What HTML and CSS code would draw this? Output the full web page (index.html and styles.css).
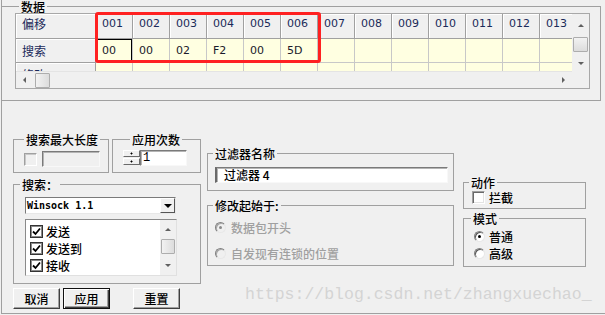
FILE: index.html
```html
<!DOCTYPE html>
<html lang="zh-CN">
<head>
    <meta charset="UTF-8">
    <title>过滤器</title>
    <link rel="stylesheet" href="styles.css">
</head>
<body>
    <div id="wrap">
        <fieldset class="box data">
            <legend>数据</legend>
            <div class="grid">
                <div class="grid-main">
                    <div class="row head">
                        <div class="rh">偏移</div>
                        <div class="c">001</div>
                        <div class="c">002</div>
                        <div class="c">003</div>
                        <div class="c">004</div>
                        <div class="c">005</div>
                        <div class="c">006</div>
                        <div class="c">007</div>
                        <div class="c">008</div>
                        <div class="c">009</div>
                        <div class="c">010</div>
                        <div class="c">011</div>
                        <div class="c">012</div>
                        <div class="c">013</div>
                    </div>
                    <div class="row vals">
                        <div class="rh">搜索</div>
                        <div class="c sel">00</div>
                        <div class="c">00</div>
                        <div class="c">02</div>
                        <div class="c">F2</div>
                        <div class="c">00</div>
                        <div class="c">5D</div>
                        <div class="c"></div>
                        <div class="c"></div>
                        <div class="c"></div>
                        <div class="c"></div>
                        <div class="c"></div>
                        <div class="c"></div>
                        <div class="c"></div>
                    </div>
                    <div class="row part">
                        <div class="rh">修改</div>
                        <div class="c"></div>
                        <div class="c"></div>
                        <div class="c"></div>
                        <div class="c"></div>
                        <div class="c"></div>
                        <div class="c"></div>
                        <div class="c"></div>
                        <div class="c"></div>
                        <div class="c"></div>
                        <div class="c"></div>
                        <div class="c"></div>
                        <div class="c"></div>
                        <div class="c"></div>
                    </div>
                    <div class="hscroll">
                        <span class="sbtn"><i class="tri left"></i></span>
                        <span class="thumb"></span>
                        <span class="sfill"></span>
                        <span class="sbtn"><i class="tri right"></i></span>
                    </div>
                </div>
                <div class="vscroll">
                    <span class="sbtn"><i class="tri up"></i></span>
                    <span class="thumb"></span>
                    <span class="sfill"></span>
                    <span class="sbtn"><i class="tri down"></i></span>
                    <span class="corner"></span>
                </div>
                <div class="hilite"></div>
            </div>
        </fieldset>

        <div class="lower">
            <div class="col-left">
                <div class="pair">
                    <fieldset class="box maxlen">
                        <legend>搜索最大长度</legend>
                        <div class="line">
                            <span class="chk off"></span>
                            <span class="edit off"></span>
                        </div>
                    </fieldset>
                    <fieldset class="box times">
                        <legend>应用次数</legend>
                        <div class="line">
                            <span class="spin"><i></i><i></i></span>
                            <span class="edit num">1</span>
                        </div>
                    </fieldset>
                </div>
                <fieldset class="box search">
                    <legend>搜索：</legend>
                    <div class="combo">
                        <span class="combo-text">Winsock 1.1</span>
                        <span class="drop"><i class="tri down big"></i></span>
                    </div>
                    <div class="list">
                        <div class="items">
                            <div class="item"><span class="chk on"><svg width="9" height="9" viewBox="0 0 9 9"><path d="M1 4.5 L3.5 7 L8 1.5" fill="none" stroke="#000" stroke-width="1.8"/></svg></span>发送</div>
                            <div class="item"><span class="chk on"><svg width="9" height="9" viewBox="0 0 9 9"><path d="M1 4.5 L3.5 7 L8 1.5" fill="none" stroke="#000" stroke-width="1.8"/></svg></span>发送到</div>
                            <div class="item"><span class="chk on"><svg width="9" height="9" viewBox="0 0 9 9"><path d="M1 4.5 L3.5 7 L8 1.5" fill="none" stroke="#000" stroke-width="1.8"/></svg></span>接收</div>
                        </div>
                        <div class="lscroll">
                            <span class="sbtn"><i class="tri up"></i></span>
                            <span class="thumb"></span>
                            <span class="sfill"></span>
                            <span class="sbtn"><i class="tri down"></i></span>
                        </div>
                    </div>
                </fieldset>
                <div class="btns">
                    <span class="btn">取消</span>
                    <span class="btn def">应用</span>
                    <span class="btn reset">重置</span>
                </div>
            </div>

            <div class="col-mid">
                <fieldset class="box fname">
                    <legend>过滤器名称</legend>
                    <div class="edit name">过滤器 4</div>
                </fieldset>
                <fieldset class="box modify">
                    <legend>修改起始于:</legend>
                    <div class="opt dis"><span class="rad dot"></span>数据包开头</div>
                    <div class="opt dis"><span class="rad"></span>自发现有连锁的位置</div>
                </fieldset>
            </div>

            <div class="col-right">
                <fieldset class="box action">
                    <legend>动作</legend>
                    <div class="opt"><span class="chk"></span>拦截</div>
                </fieldset>
                <fieldset class="box mode">
                    <legend>模式</legend>
                    <div class="opt"><span class="rad dot"></span>普通</div>
                    <div class="opt"><span class="rad"></span>高级</div>
                </fieldset>
            </div>
        </div>

        <div class="mark">https://blog.csdn.net/zhangxuechao_</div>
    </div>
</body>
</html>
```

FILE: styles.css
```css
*{
    margin: 0;
    padding: 0;
    box-sizing: border-box;
}
body{
    background-color: #f0f0f0;
    font-family: "Noto Sans CJK SC", sans-serif;
    font-size: 12px;
    font-weight: 500;
    color: #000;
    overflow: hidden;
}
#wrap{
    position: relative;
    width: 604px;
    height: 314px;
    margin-left: 1px;
    border-left: 1px solid #a0a0a0;
    border-bottom: 1px solid #a0a0a0;
}

/* group boxes */
.box{
    border: 1px solid #a0a0a0;
    min-width: 0;
}
.box legend{
    height: 13px;
    line-height: 13px;
    padding: 0 2px;
    font-size: 12px;
}
.data{
    width: 599px;
    height: 101px;
    border-left: none;
    padding: 0 10px 0 13px;
}
.data legend{margin-left: 4px;}

/* grid */
.grid{
    position: relative;
    display: flex;
    width: 575px;
    height: 76px;
    border: 1px solid #a8a8a8;
    font-weight: 400;
}
.grid-main{
    width: 556px;
    display: flex;
    flex-direction: column;
    overflow: hidden;
}
.row{
    display: flex;
    flex: none;
}
.rh{
    width: 80px;
    flex: none;
    padding-left: 6px;
    background-color: #f0f0f0;
    color: #1b2a5a;
    border-right: 1px solid #a0a0a0;
    border-bottom: 1px solid #a0a0a0;
    box-shadow: inset 1px 1px #fff;
    overflow: hidden;
}
.c{
    width: 37px;
    flex: none;
    padding-left: 6px;
    font-family: "DejaVu Sans", sans-serif;
    font-size: 11px;
}
.head{height: 25px;}
.head .rh, .head .c{
    line-height: 20px;
}
.head .c{
    background-color: #f0f0f0;
    color: #1b2a5a;
    border-right: 1px solid #a0a0a0;
    border-bottom: 1px solid #a0a0a0;
    box-shadow: inset 1px 1px #fff;
}
.vals{height: 24px;}
.vals .rh, .vals .c{line-height: 23px;}
.vals .c, .part .c{
    background-color: #ffffe1;
    color: #1a1a2a;
    border-right: 1px solid #c8c8c8;
    border-bottom: 1px solid #c8c8c8;
}
.vals .c.sel{
    box-shadow: inset 0 0 0 1px #000;
}
.part{height: 8px;}
.part .rh{line-height: 23px; border-bottom: none;}
.part .c{border-bottom: none;}

.hilite{
    position: absolute;
    left: 79px;
    top: -2px;
    width: 226px;
    height: 51px;
    border: 3px solid #ff2121;
    border-radius: 3px;
}

/* scrollbars */
.hscroll{
    display: flex;
    height: 17px;
    flex: none;
    align-items: center;
    background-color: #f0f0f0;
    border-top: 1px solid #e4e4e4;
}
.sbtn{
    width: 17px;
    height: 17px;
    flex: none;
    display: flex;
    align-items: center;
    justify-content: center;
}
.sfill{flex: 1;}
.thumb{
    flex: none;
    background: linear-gradient(to right, #f2f2f2, #dcdcdc);
    border: 1px solid #adadad;
    border-radius: 1px;
}
.hscroll .thumb{
    width: 15px;
    height: 15px;
    margin-left: 2px;
}
.vscroll{
    width: 17px;
    display: flex;
    flex-direction: column;
    align-items: center;
    background-color: #f0f0f0;
}
.vscroll .thumb{
    width: 15px;
    height: 15px;
    margin-top: 1px;
    background: linear-gradient(to bottom, #f2f2f2, #dcdcdc);
}
.vscroll .sbtn{height: 22px;}
.vscroll .corner{
    height: 18px;
    width: 17px;
    flex: none;
}
.tri{
    display: block;
    width: 0;
    height: 0;
}
.tri.up{
    border-left: 3px solid transparent;
    border-right: 3px solid transparent;
    border-bottom: 3px solid #606060;
}
.tri.down{
    border-left: 3px solid transparent;
    border-right: 3px solid transparent;
    border-top: 3px solid #606060;
}
.tri.left{
    border-top: 3px solid transparent;
    border-bottom: 3px solid transparent;
    border-right: 3px solid #606060;
}
.tri.right{
    border-top: 3px solid transparent;
    border-bottom: 3px solid transparent;
    border-left: 3px solid #606060;
}
.tri.big{
    border-left-width: 4px;
    border-right-width: 4px;
    border-top: 4px solid #000;
}

/* lower part */
.lower{
    display: flex;
    align-items: flex-start;
    padding-left: 11px;
}
.col-left{
    width: 188px;
    margin-top: 32px;
}
.pair{
    display: flex;
    gap: 3px;
}
.maxlen{width: 96px; height: 40px;}
.maxlen legend{margin-left: 10px;}
.times{width: 89px; height: 40px;}
.times legend{margin-left: 17px;}
.line{
    display: flex;
    align-items: center;
    gap: 5px;
    height: 26px;
    padding-left: 10px;
}
.times .line{
    gap: 0;
    align-items: flex-start;
    padding-top: 4px;
}

.chk{
    width: 13px;
    height: 13px;
    flex: none;
    display: flex;
    align-items: center;
    justify-content: center;
    background-color: #fff;
    border: 1px solid;
    border-color: #a0a0a0 #fff #fff #a0a0a0;
    box-shadow: inset 1px 1px #696969, inset -1px -1px #e3e3e3;
}
.chk.off{
    background-color: #f0f0f0;
    box-shadow: inset 1px 1px #c8c8c8;
}
.chk.on{
    border: 1px solid #333;
    box-shadow: inset 0 0 0 1px #8a8a8a;
}
.edit{
    display: block;
    height: 16px;
    background-color: #fff;
    border: 1px solid;
    border-color: #7a7a7a #f8f8f8 #f8f8f8 #7a7a7a;
    box-shadow: inset 1px 1px #b4b4b4;
}
.edit.off{
    width: 58px;
    background-color: #f0f0f0;
}
.edit.num{
    width: 47px;
    padding-left: 2px;
    line-height: 14px;
    font-family: "Liberation Mono", monospace;
}
.spin{
    width: 17px;
    height: 15px;
    display: flex;
    flex-direction: column;
    gap: 1px;
}
.spin i{
    flex: 1;
    border: 1px solid;
    border-color: #fff #6a6a6a #6a6a6a #fff;
    background: radial-gradient(circle, #000 0.8px, transparent 1.2px) center / 100% 100% no-repeat #f0f0f0;
}

.search{
    width: 188px;
    height: 106px;
    margin-top: 5px;
    padding-left: 11px;
}
.search legend{margin-left: -5px;}
.combo{
    display: flex;
    align-items: center;
    width: 151px;
    height: 17px;
    margin-top: 6px;
    background-color: #fff;
    border: 1px solid;
    border-color: #7a7a7a #e8e8e8 #e8e8e8 #7a7a7a;
}
.combo-text{
    flex: 1;
    padding-left: 1px;
    font-family: "DejaVu Sans Mono", monospace;
    font-size: 10px;
    font-weight: bold;
    line-height: 15px;
}
.drop{
    width: 15px;
    height: 15px;
    display: flex;
    align-items: center;
    justify-content: center;
    background-color: #f0f0f0;
    border: 1px solid;
    border-color: #fff #555 #555 #fff;
}
.list{
    display: flex;
    width: 152px;
    height: 57px;
    margin-top: 5px;
    background-color: #fff;
    border: 1px solid;
    border-color: #8a8a8a #e0e0e0 #e0e0e0 #8a8a8a;
}
.items{
    flex: 1;
    padding-top: 3px;
    padding-left: 4px;
}
.item{
    display: flex;
    align-items: center;
    gap: 3px;
    height: 17px;
}
.lscroll{
    width: 16px;
    display: flex;
    flex-direction: column;
    align-items: center;
    background-color: #f0f0f0;
}
.lscroll .sbtn{height: 19px;}
.lscroll .thumb{
    width: 14px;
    height: 15px;
    background: linear-gradient(to right, #f2f2f2, #dcdcdc);
}

.btns{
    display: flex;
    margin-top: 4px;
}
.btn{
    width: 47px;
    height: 21px;
    display: flex;
    align-items: center;
    justify-content: center;
    background-color: #f0f0f0;
    border: 1px solid;
    border-color: #fff #404040 #404040 #fff;
    box-shadow: inset -1px -1px #a0a0a0;
}
.btn.def{
    margin-left: 3px;
    border: 1px solid #111;
    box-shadow: inset 1px 1px #fff, inset -1px -1px #404040, inset -2px -2px #a0a0a0;
}
.btn.reset{margin-left: 23px;}

.col-mid{
    width: 247px;
    margin-left: 6px;
    margin-top: 46px;
}
.fname{
    height: 44px;
    padding-left: 7px;
}
.fname legend, .modify legend{margin-left: -2px;}
.edit.name{
    width: 233px;
    margin-top: 7px;
    padding-left: 7px;
    line-height: 14px;
    border-left-width: 2px;
    border-left-color: #6a6a6a;
}
.modify{
    height: 67px;
    margin-top: 8px;
    padding: 5px 0 0 7px;
}
.opt{
    display: flex;
    align-items: center;
    gap: 5px;
    height: 20px;
}
.modify .opt + .opt{margin-top: 6px;}
.opt.dis{color: #a0a0a0;}

.rad{
    position: relative;
    width: 11px;
    height: 11px;
    flex: none;
    border-radius: 50%;
    background-color: #fff;
    border: 1px solid;
    border-color: #808080 #e8e8e8 #e8e8e8 #808080;
    box-shadow: inset 1px 1px #5a5a5a;
}
.rad.dot::after{
    content: "";
    position: absolute;
    left: 3px;
    top: 3px;
    width: 3px;
    height: 3px;
    border-radius: 50%;
    background-color: #000;
}
.dis .rad{
    background-color: #f0f0f0;
    box-shadow: inset 1px 1px #a8a8a8;
}
.dis .rad.dot::after{background-color: #8a8a8a;}

.col-right{
    width: 123px;
    margin-left: 9px;
    margin-top: 75px;
}
.action{
    height: 33px;
    padding: 1px 0 0 8px;
}
.action legend, .mode legend{margin-left: -3px;}
.action .opt{height: 14px; gap: 4px;}
.mode{
    height: 55px;
    margin-top: 3px;
    padding: 3px 0 0 10px;
}
.mode .opt{height: 16px; gap: 4px;}
.mode .opt + .opt{margin-top: 1px;}

.mark{
    position: absolute;
    left: 243px;
    top: 285px;
    font-family: "Liberation Mono", monospace;
    font-size: 16.5px;
    font-weight: 400;
    line-height: 20px;
    color: #d4d4d4;
    white-space: nowrap;
}
```
